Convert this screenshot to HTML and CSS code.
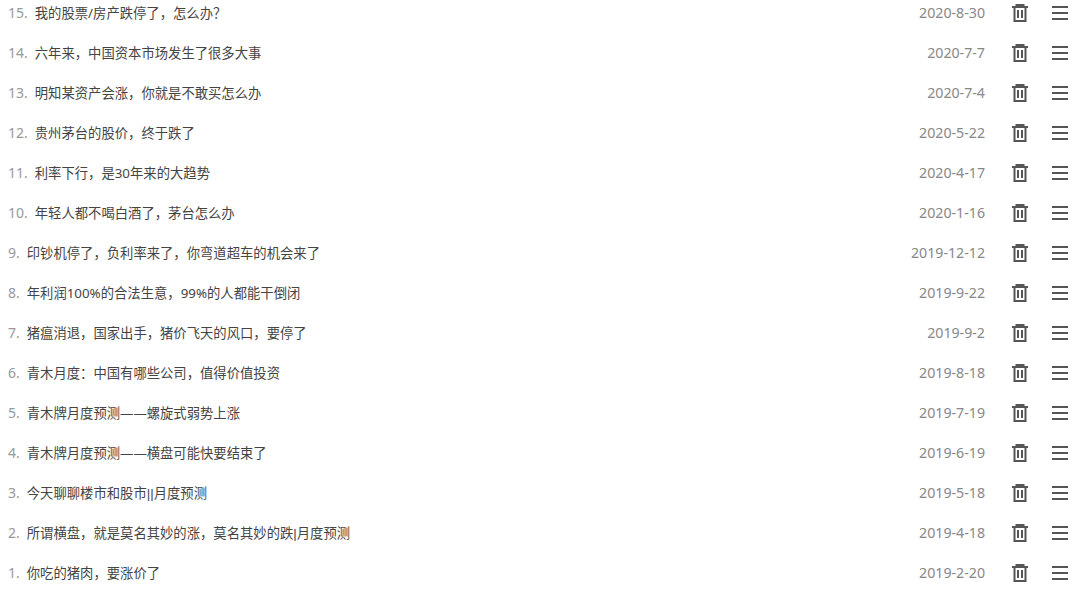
FILE: index.html
```html
<!DOCTYPE html>
<html lang="zh-CN">
  <head>
    <meta charset="UTF-8" />
    <meta name="viewport" content="width=device-width, initial-scale=1.0" />
    <title>文章列表</title>
    <link rel="stylesheet" href="styles.css">
  </head>
  <body>
    <svg class="sprites" width="0" height="0">
      <symbol id="trash" viewBox="0 0 16 18">
        <path d="M0 3h16M4.5 3V1h7v2M2.5 3V17h11V3M6 6v8M10 6v8" fill="none" stroke="currentColor" stroke-width="2"/>
      </symbol>
      <symbol id="menu" viewBox="0 0 16 14">
        <path d="M0 1h16M0 7h16M0 13h16" fill="none" stroke="currentColor" stroke-width="2"/>
      </symbol>
    </svg>
    <ul class="list">
      <li class="row"><div class="title"><span class="num">15.</span>我的股票/房产跌停了，怎么办？</div><span class="date">2020-8-30</span><svg class="icon trash"><use href="#trash"/></svg><svg class="icon menu"><use href="#menu"/></svg></li>
      <li class="row"><div class="title"><span class="num">14.</span>六年来，中国资本市场发生了很多大事</div><span class="date">2020-7-7</span><svg class="icon trash"><use href="#trash"/></svg><svg class="icon menu"><use href="#menu"/></svg></li>
      <li class="row"><div class="title"><span class="num">13.</span>明知某资产会涨，你就是不敢买怎么办</div><span class="date">2020-7-4</span><svg class="icon trash"><use href="#trash"/></svg><svg class="icon menu"><use href="#menu"/></svg></li>
      <li class="row"><div class="title"><span class="num">12.</span>贵州茅台的股价，终于跌了</div><span class="date">2020-5-22</span><svg class="icon trash"><use href="#trash"/></svg><svg class="icon menu"><use href="#menu"/></svg></li>
      <li class="row"><div class="title"><span class="num">11.</span>利率下行，是30年来的大趋势</div><span class="date">2020-4-17</span><svg class="icon trash"><use href="#trash"/></svg><svg class="icon menu"><use href="#menu"/></svg></li>
      <li class="row"><div class="title"><span class="num">10.</span>年轻人都不喝白酒了，茅台怎么办</div><span class="date">2020-1-16</span><svg class="icon trash"><use href="#trash"/></svg><svg class="icon menu"><use href="#menu"/></svg></li>
      <li class="row"><div class="title"><span class="num">9.</span>印钞机停了，负利率来了，你弯道超车的机会来了</div><span class="date">2019-12-12</span><svg class="icon trash"><use href="#trash"/></svg><svg class="icon menu"><use href="#menu"/></svg></li>
      <li class="row"><div class="title"><span class="num">8.</span>年利润100%的合法生意，99%的人都能干倒闭</div><span class="date">2019-9-22</span><svg class="icon trash"><use href="#trash"/></svg><svg class="icon menu"><use href="#menu"/></svg></li>
      <li class="row"><div class="title"><span class="num">7.</span>猪瘟消退，国家出手，猪价飞天的风口，要停了</div><span class="date">2019-9-2</span><svg class="icon trash"><use href="#trash"/></svg><svg class="icon menu"><use href="#menu"/></svg></li>
      <li class="row"><div class="title"><span class="num">6.</span>青木月度：中国有哪些公司，值得价值投资</div><span class="date">2019-8-18</span><svg class="icon trash"><use href="#trash"/></svg><svg class="icon menu"><use href="#menu"/></svg></li>
      <li class="row"><div class="title"><span class="num">5.</span>青木牌月度预测——螺旋式弱势上涨</div><span class="date">2019-7-19</span><svg class="icon trash"><use href="#trash"/></svg><svg class="icon menu"><use href="#menu"/></svg></li>
      <li class="row"><div class="title"><span class="num">4.</span>青木牌月度预测——横盘可能快要结束了</div><span class="date">2019-6-19</span><svg class="icon trash"><use href="#trash"/></svg><svg class="icon menu"><use href="#menu"/></svg></li>
      <li class="row"><div class="title"><span class="num">3.</span>今天聊聊楼市和股市<span class="pipe">||</span>月度预测</div><span class="date">2019-5-18</span><svg class="icon trash"><use href="#trash"/></svg><svg class="icon menu"><use href="#menu"/></svg></li>
      <li class="row"><div class="title"><span class="num">2.</span>所谓横盘，就是莫名其妙的涨，莫名其妙的跌<span class="pipe">|</span>月度预测</div><span class="date">2019-4-18</span><svg class="icon trash"><use href="#trash"/></svg><svg class="icon menu"><use href="#menu"/></svg></li>
      <li class="row"><div class="title"><span class="num">1.</span>你吃的猪肉，要涨价了</div><span class="date">2019-2-20</span><svg class="icon trash"><use href="#trash"/></svg><svg class="icon menu"><use href="#menu"/></svg></li>
    </ul>
  </body>
</html>
```

FILE: styles.css
```css
body {
  margin: 0;
  background: #fff;
  font-family: "Noto Sans", "Noto Sans CJK SC", sans-serif;
  overflow: hidden;
}

.sprites {
  position: absolute;
}

.list {
  list-style: none;
  margin: -7px 0 0;
  padding: 0 12px 0 8px;
}

.row {
  display: flex;
  align-items: center;
  height: 40px;
}

.title {
  flex: 1;
  margin-top: -2px;
  font-size: 13.33px;
  color: #444;
  white-space: nowrap;
}

.num {
  margin-right: 7px;
  font-size: 14px;
  color: #999;
}

.pipe {
  font-family: "Liberation Sans", sans-serif;
}

.date {
  margin-top: -2px;
  font-size: 14.2px;
  color: #888;
}

.icon {
  color: #555;
}

.trash {
  width: 16px;
  height: 18px;
  margin-left: 27px;
}

.menu {
  width: 16px;
  height: 14px;
  margin-left: 24px;
}
```
